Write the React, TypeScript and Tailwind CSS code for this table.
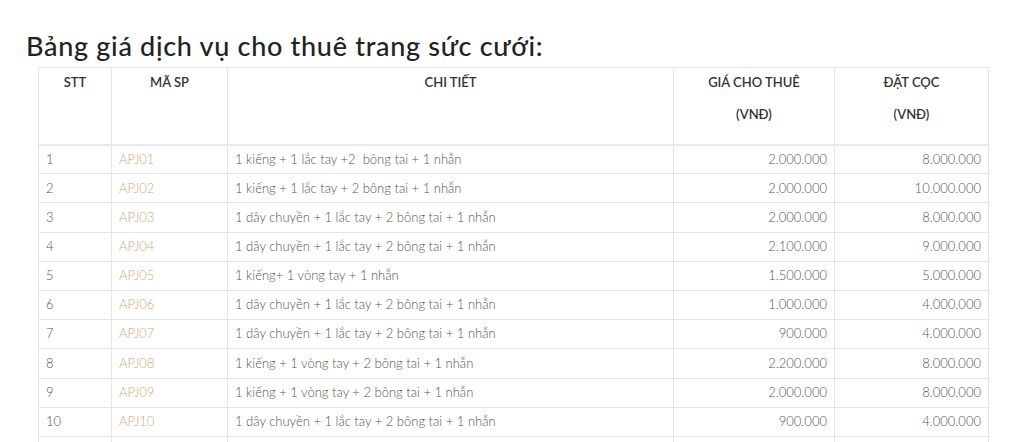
const rows = [
  ['1', 'APJ01', '1 kiếng + 1 lắc tay +2  bông tai + 1 nhẫn', '2.000.000', '8.000.000'],
  ['2', 'APJ02', '1 kiếng + 1 lắc tay + 2 bông tai + 1 nhẫn', '2.000.000', '10.000.000'],
  ['3', 'APJ03', '1 dây chuyền + 1 lắc tay + 2 bông tai + 1 nhẫn', '2.000.000', '8.000.000'],
  ['4', 'APJ04', '1 dây chuyền + 1 lắc tay + 2 bông tai + 1 nhẫn', '2.100.000', '9.000.000'],
  ['5', 'APJ05', '1 kiếng+ 1 vòng tay + 1 nhẫn', '1.500.000', '5.000.000'],
  ['6', 'APJ06', '1 dây chuyền + 1 lắc tay + 2 bông tai + 1 nhẫn', '1.000.000', '4.000.000'],
  ['7', 'APJ07', '1 dây chuyền + 1 lắc tay + 2 bông tai + 1 nhẫn', '900.000', '4.000.000'],
  ['8', 'APJ08', '1 kiếng + 1 vòng tay + 2 bông tai + 1 nhẫn', '2.200.000', '8.000.000'],
  ['9', 'APJ09', '1 kiếng + 1 vòng tay + 2 bông tai + 1 nhẫn', '2.000.000', '8.000.000'],
  ['10', 'APJ10', '1 dây chuyền + 1 lắc tay + 2 bông tai + 1 nhẫn', '900.000', '4.000.000'],
  ['11', 'APJ11', '1 kiếng + 1 lắc tay + 2 bông tai + 1 nhẫn', '2.000.000', '8.000.000'],
];

export default function App() {
  return (
    <div className="bg-white h-[442px] overflow-hidden pt-[28px] font-['Lato','Noto_Sans',sans-serif]">
      <h2 className="pl-[26px] text-[27px] leading-[36px] font-medium text-[#222] tracking-[0.7px]">
        Bảng giá dịch vụ cho thuê trang sức cưới:
      </h2>
      <table className="ml-[38px] mt-[3px] w-[950px] table-fixed border-collapse text-[13px]">
        <colgroup>
          <col className="w-[73px]" />
          <col className="w-[116px]" />
          <col className="w-[446px]" />
          <col className="w-[161px]" />
          <col className="w-[154px]" />
        </colgroup>
        <thead>
          <tr className="h-[77px] border-b-2 border-[#e8e8e8]">
            {[['STT'], ['MÃ SP'], ['CHI TIẾT'], ['GIÁ CHO THUÊ', '(VNĐ)'], ['ĐẶT CỌC', '(VNĐ)']].map((h, i) => (
              <th key={i} className="border border-[#e5e5e5] align-top pt-[5px] px-[7px] font-semibold text-[#333] text-center">
                {h.map((l, j) => (
                  <p key={j} className={j > 0 ? 'mt-[14px] leading-[18px]' : 'leading-[18px]'}>{l}</p>
                ))}
              </th>
            ))}
          </tr>
        </thead>
        <tbody className="text-[#555] font-light">
          {rows.map((r) => (
            <tr key={r[0]} className="h-[29.2px]">
              <td className="border border-[#e5e5e5] px-[7px] py-0">{r[0]}</td>
              <td className="border border-[#e5e5e5] px-[7px] py-0 text-[#d6a878]">{r[1]}</td>
              <td className="border border-[#e5e5e5] px-[7px] py-0 whitespace-pre">{r[2]}</td>
              <td className="border border-[#e5e5e5] px-[7px] py-0 text-right">{r[3]}</td>
              <td className="border border-[#e5e5e5] px-[7px] py-0 text-right">{r[4]}</td>
            </tr>
          ))}
        </tbody>
      </table>
    </div>
  );
}
